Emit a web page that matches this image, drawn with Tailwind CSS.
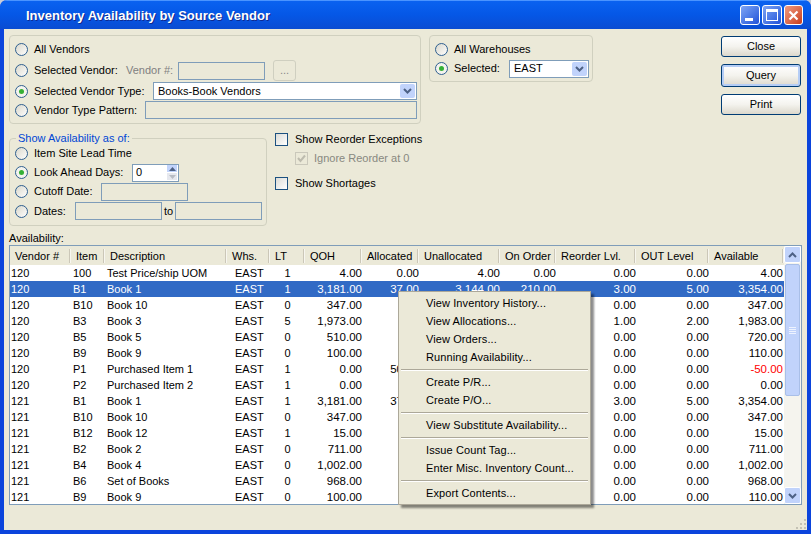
<!DOCTYPE html>
<html lang="en">
<head>
    <meta charset="UTF-8">
    <title>Inventory Availability by Source Vendor</title>
    <script src="https://cdn.jsdelivr.net/npm/@tailwindcss/browser@4"></script>
</head>
<body class="w-[811px] h-[534px] overflow-hidden bg-[#c8ccd8] font-['Liberation_Sans',sans-serif] text-[11px] leading-none text-black">
    <div class="relative w-[811px] h-[534px] flex flex-col rounded-t-[7px] overflow-hidden bg-[#0b44dc]">
        <!-- Title bar -->
        <div class="h-[29px] shrink-0 flex items-center pl-[26px] pr-[8px] bg-gradient-to-b from-[#0a62f0] via-[#0557e6] to-[#0a4cd2] border-t border-[#4a94ff]">
            <span class="text-white font-bold text-[13px] [text-shadow:1px_1px_#0f2a90]">Inventory Availability by Source Vendor</span>
            <div class="ml-auto flex gap-[2px]">
                <div class="w-[20px] h-[20px] rounded-[3px] border border-white bg-gradient-to-br from-[#7fa4f4] to-[#2250d8] flex items-end pl-[4px] pb-[3px]"><div class="w-[8px] h-[3px] bg-white"></div></div>
                <div class="w-[20px] h-[20px] rounded-[3px] border border-white bg-gradient-to-br from-[#7fa4f4] to-[#2250d8] p-[3px]"><div class="w-full h-full border border-white border-t-[3px]"></div></div>
                <div class="w-[19px] h-[20px] rounded-[3px] border border-white bg-gradient-to-br from-[#ee9a80] to-[#c93a14] flex items-center justify-center">
                    <svg width="13" height="13" viewBox="0 0 13 13"><path d="M2.5 2.5l8 8M10.5 2.5l-8 8" stroke="#fff" stroke-width="2.2"/></svg>
                </div>
            </div>
        </div>

        <!-- Client area -->
        <div class="flex-1 mx-[4px] mb-[4px] bg-[#ebe9d8] flex flex-col px-[5px] pt-[6px]">
            <div class="flex h-[98px] shrink-0">
                <!-- Vendor group -->
                <div class="w-[412px] h-[89px] border border-[#d0d0bf] rounded-[4px] pl-[5px] pt-[3px] flex flex-col">
                    <div class="h-[21px] flex items-center"><span data-radio></span><span>All Vendors</span></div>
                    <div class="h-[21px] flex items-center"><span data-radio></span><span class="w-[92px]">Selected Vendor:</span>
                        <span class="w-[52px] text-[#808080]">Vendor #:</span>
                        <div class="w-[87px] h-[18px] border border-[#7f9db9]"></div>
                        <div class="ml-[8px] w-[23px] h-[21px] border border-[#cfcfc0] rounded-[3px] text-center leading-[19px] text-[#888]">...</div>
                    </div>
                    <div class="h-[20px] flex items-center"><span data-radio="on"></span><span class="w-[119px]">Selected Vendor Type:</span>
                        <div class="w-[264px] h-[18px] bg-white border border-[#7f9db9] pl-[4px] flex items-center justify-between">Books-Book Vendors<span data-arrow></span></div>
                    </div>
                    <div class="h-[18px] flex items-center"><span data-radio></span><span class="w-[111px]">Vendor Type Pattern:</span>
                        <div class="w-[272px] h-[18px] border border-[#7f9db9]"></div>
                    </div>
                </div>

                <!-- Warehouse group -->
                <div class="ml-[8px] w-[164px] h-[47px] border border-[#d0d0bf] rounded-[4px] pl-[5px] pt-[4px] flex flex-col">
                    <div class="h-[19px] flex items-center"><span data-radio></span><span>All Warehouses</span></div>
                    <div class="h-[19px] flex items-center"><span data-radio="on"></span><span class="w-[55px]">Selected:</span>
                        <div class="w-[80px] h-[18px] bg-white border border-[#7f9db9] pl-[4px] flex items-center justify-between">EAST<span data-arrow></span></div>
                    </div>
                </div>

                <!-- Buttons -->
                <div class="ml-auto mr-[1px] mt-[1px] w-[80px] flex flex-col gap-[7px]">
                    <div class="h-[21px] border border-[#003c74] rounded-[3px] bg-gradient-to-b from-white via-[#f4f3ee] to-[#dcd8cc] flex items-center justify-center">Close</div>
                    <div class="h-[23px] border border-[#003c74] rounded-[3px] bg-gradient-to-b from-white via-[#f4f3ee] to-[#dcd8cc] shadow-[inset_0_0_0_2px_#b5cdf5] flex items-center justify-center">Query</div>
                    <div class="h-[21px] border border-[#003c74] rounded-[3px] bg-gradient-to-b from-white via-[#f4f3ee] to-[#dcd8cc] flex items-center justify-center">Print</div>
                </div>
            </div>

            <div class="flex h-[98px] shrink-0">
                <!-- Show availability group -->
                <div class="relative mt-[5px] w-[258px] h-[88px] border border-[#d0d0bf] rounded-[4px] pl-[5px] pt-[5px] flex flex-col">
                    <span class="absolute left-[6px] -top-[6px] px-[2px] bg-[#ebe9d8] text-[#0046d5]">Show Availability as of:</span>
                    <div class="h-[19px] flex items-center"><span data-radio></span><span>Item Site Lead Time</span></div>
                    <div class="h-[19px] flex items-center"><span data-radio="on"></span><span class="w-[98px]">Look Ahead Days:</span>
                        <div class="w-[47px] h-[18px] bg-white border border-[#7f9db9] pl-[3px] flex items-center justify-between">0
                            <span class="w-[10px] mr-[1px] flex flex-col gap-[1px]">
                                <span class="h-[7px] bg-[#c1d3fb] flex items-center justify-center"><svg width="7" height="4" viewBox="0 0 7 4"><path d="M0 4l3.500-4 3.500 4z" fill="#4d6185"/></svg></span>
                                <span class="h-[7px] bg-[#e6e8ee] flex items-center justify-center"><svg width="7" height="4" viewBox="0 0 7 4"><path d="M0 0l3.500 4 3.500-4z" fill="#b8bcc4"/></svg></span>
                            </span>
                        </div>
                    </div>
                    <div class="h-[19px] flex items-center"><span data-radio></span><span class="w-[67px]">Cutoff Date:</span>
                        <div class="w-[87px] h-[18px] border border-[#7f9db9]"></div>
                    </div>
                    <div class="h-[20px] flex items-center"><span data-radio></span><span class="w-[41px]">Dates:</span>
                        <div class="w-[87px] h-[18px] border border-[#7f9db9]"></div>
                        <span class="w-[13px] text-center">to</span>
                        <div class="w-[87px] h-[18px] border border-[#7f9db9]"></div>
                    </div>
                </div>

                <!-- Checkboxes -->
                <div class="ml-[8px] flex flex-col">
                    <div class="h-[13px] flex items-center gap-[7px]"><span class="w-[13px] h-[13px] border border-[#1c5180] bg-gradient-to-br from-[#dcdcd7] to-white"></span>Show Reorder Exceptions</div>
                    <div class="mt-[6px] ml-[20px] h-[13px] flex items-center gap-[6px] text-[#888880]">
                        <span class="w-[13px] h-[13px] border border-[#cac8bb] flex items-center justify-center"><svg width="9" height="9" viewBox="0 0 9 9"><path d="M1 4l2.500 3L8 1.500" fill="none" stroke="#bdbbae" stroke-width="2"/></svg></span>Ignore Reorder at 0</div>
                    <div class="mt-[12px] h-[13px] flex items-center gap-[7px]"><span class="w-[13px] h-[13px] border border-[#1c5180] bg-gradient-to-br from-[#dcdcd7] to-white"></span>Show Shortages</div>
                </div>
            </div>

            <div class="h-[14px] shrink-0 flex items-center">Availability:</div>

            <!-- Availability table -->
            <div class="h-[260px] shrink-0 border border-[#7f9db9] bg-white flex">
                <div class="w-[774px] flex flex-col">
                    <div id="head" class="h-[19px] shrink-0 bg-[#ebe9d8] grid grid-cols-[61px_34px_122px_43px_35px_57px_57px_81px_56px_80px_73px_75px]"></div>
                    <div id="rows" class="flex-1 overflow-hidden"></div>
                </div>
                <!-- Scrollbar -->
                <div class="w-[17px] bg-[#f5f4ee] flex flex-col">
                    <div class="h-[17px] rounded-[2px] border border-white bg-[#c1d3fb] flex items-center justify-center"><svg width="9" height="6" viewBox="0 0 9 6"><path d="M1 5l3.500-3.500L8 5" fill="none" stroke="#4d6185" stroke-width="2"/></svg></div>
                    <div class="mt-[1px] mx-[1px] h-[132px] rounded-[2px] border border-[#a9bfe8] bg-[#c1d3fb] flex flex-col items-center justify-center gap-[1px]">
                        <div class="w-[7px] h-[1px] bg-[#eef3ff]"></div><div class="w-[7px] h-[1px] bg-[#eef3ff]"></div><div class="w-[7px] h-[1px] bg-[#eef3ff]"></div><div class="w-[7px] h-[1px] bg-[#eef3ff]"></div>
                    </div>
                    <div class="mt-auto h-[17px] rounded-[2px] border border-white bg-[#c1d3fb] flex items-center justify-center"><svg width="9" height="6" viewBox="0 0 9 6"><path d="M1 1l3.500 3.500L8 1" fill="none" stroke="#4d6185" stroke-width="2"/></svg></div>
                </div>
            </div>

            <!-- Resize grip -->
            <div class="flex-1 flex justify-end items-end">
                <svg class="-mr-[5px]" width="12" height="12" viewBox="0 0 12 12" fill="#c4c2b4"><rect x="9" y="1" width="2" height="2"/><rect x="5" y="5" width="2" height="2"/><rect x="9" y="5" width="2" height="2"/><rect x="1" y="9" width="2" height="2"/><rect x="5" y="9" width="2" height="2"/><rect x="9" y="9" width="2" height="2"/></svg>
            </div>
        </div>

        <!-- Context menu -->
        <div class="absolute left-[398px] top-[291px] w-[193px] h-[214px] bg-[#ebe9d8] border border-[#aca899] shadow-[3px_3px_2px_rgba(0,0,0,0.45)] pt-[2px] tracking-[0.1px]">
            <div class="h-[18px] pl-[27px] pt-[1px] flex items-center">View Inventory History...</div>
            <div class="h-[18px] pl-[27px] pt-[1px] flex items-center">View Allocations...</div>
            <div class="h-[18px] pl-[27px] pt-[1px] flex items-center">View Orders...</div>
            <div class="h-[18px] pl-[27px] pt-[1px] flex items-center">Running Availability...</div>
            <div class="h-[7px] mx-[2px] flex items-center"><div class="w-full h-[2px] bg-[#aca899] border-b border-white"></div></div>
            <div class="h-[18px] pl-[27px] pt-[1px] flex items-center">Create P/R...</div>
            <div class="h-[18px] pl-[27px] pt-[1px] flex items-center">Create P/O...</div>
            <div class="h-[7px] mx-[2px] flex items-center"><div class="w-full h-[2px] bg-[#aca899] border-b border-white"></div></div>
            <div class="h-[18px] pl-[27px] pt-[1px] flex items-center">View Substitute Availability...</div>
            <div class="h-[7px] mx-[2px] flex items-center"><div class="w-full h-[2px] bg-[#aca899] border-b border-white"></div></div>
            <div class="h-[18px] pl-[27px] pt-[1px] flex items-center">Issue Count Tag...</div>
            <div class="h-[18px] pl-[27px] pt-[1px] flex items-center">Enter Misc. Inventory Count...</div>
            <div class="h-[7px] mx-[2px] flex items-center"><div class="w-full h-[2px] bg-[#aca899] border-b border-white"></div></div>
            <div class="h-[18px] pl-[27px] pt-[1px] flex items-center">Export Contents...</div>
        </div>
    </div>

    <script>
        const RADIO_OFF = '<svg class="mr-[6px] shrink-0" width="13" height="13" viewBox="0 0 13 13"><defs><linearGradient id="rg" x1="0" y1="0" x2="1" y2="1"><stop offset="0" stop-color="#d8d6ca"/><stop offset="1" stop-color="#fff"/></linearGradient></defs><circle cx="6.500" cy="6.500" r="6" fill="url(#rg)" stroke="#2f5f8f"/></svg>';
        const RADIO_ON = '<svg class="mr-[6px] shrink-0" width="13" height="13" viewBox="0 0 13 13"><circle cx="6.500" cy="6.500" r="6" fill="#f4f3ee" stroke="#2f5f8f"/><circle cx="6.500" cy="6.500" r="2.500" fill="#35b035"/></svg>';
        const ARROW = '<span class="w-[15px] h-[14px] mr-[1px] rounded-[2px] bg-[#c1d3fb] flex items-center justify-center"><svg width="9" height="6" viewBox="0 0 9 6"><path d="M1 1l3.500 3.500L8 1" fill="none" stroke="#4d6185" stroke-width="2"/></svg></span>';

        document.querySelectorAll('[data-radio]').forEach(el => {
            el.outerHTML = el.dataset.radio === 'on' ? RADIO_ON : RADIO_OFF;
        });
        document.querySelectorAll('[data-arrow]').forEach(el => { el.outerHTML = ARROW; });

        const headers = ['Vendor #', 'Item', 'Description', 'Whs.', 'LT', 'QOH', 'Allocated', 'Unallocated', 'On Order', 'Reorder Lvl.', 'OUT Level', 'Available'];
        document.getElementById('head').innerHTML = headers.map(h => `
            <div class="h-[19px] flex items-center pl-[5px] pt-[1px] justify-between whitespace-nowrap">${h}<span class="w-[2px] h-[14px] border-l border-[#cbc7b8] bg-white/60"></span></div>
        `).join('');

        // cells under the open menu are left empty, the menu covers them anyway
        const rows = [
            ['120', '100', 'Test Price/ship UOM', '1', '4.00', '0.00', '4.00', '0.00', '0.00', '0.00', '4.00'],
            ['120', 'B1', 'Book 1', '1', '3,181.00', '37.00', '3,144.00', '210.00', '3.00', '5.00', '3,354.00'],
            ['120', 'B10', 'Book 10', '0', '347.00', '', '', '', '0.00', '0.00', '347.00'],
            ['120', 'B3', 'Book 3', '5', '1,973.00', '', '', '', '1.00', '2.00', '1,983.00'],
            ['120', 'B5', 'Book 5', '0', '510.00', '', '', '', '0.00', '0.00', '720.00'],
            ['120', 'B9', 'Book 9', '0', '100.00', '', '', '', '0.00', '0.00', '110.00'],
            ['120', 'P1', 'Purchased Item 1', '1', '0.00', '50.00', '', '', '0.00', '0.00', '-50.00'],
            ['120', 'P2', 'Purchased Item 2', '1', '0.00', '', '', '', '0.00', '0.00', '0.00'],
            ['121', 'B1', 'Book 1', '1', '3,181.00', '37.00', '', '', '3.00', '5.00', '3,354.00'],
            ['121', 'B10', 'Book 10', '0', '347.00', '', '', '', '0.00', '0.00', '347.00'],
            ['121', 'B12', 'Book 12', '1', '15.00', '', '', '', '0.00', '0.00', '15.00'],
            ['121', 'B2', 'Book 2', '0', '711.00', '', '', '', '0.00', '0.00', '711.00'],
            ['121', 'B4', 'Book 4', '0', '1,002.00', '', '', '', '0.00', '0.00', '1,002.00'],
            ['121', 'B6', 'Set of Books', '0', '968.00', '', '', '', '0.00', '0.00', '968.00'],
            ['121', 'B9', 'Book 9', '0', '100.00', '', '', '', '0.00', '0.00', '110.00'],
        ];

        document.getElementById('rows').innerHTML = rows.map((r, i) => {
            const rowClass = i === 1 ? 'bg-[#316ac5] text-white' : '';
            const nums = r.slice(4).map((n, j) => {
                const last = j === 6 ? 'pr-[1px]' : '';
                const red = n.startsWith('-') ? 'text-[#ff0000]' : '';
                return `<div class="text-right text-[11.5px] ${last} ${red}">${n}</div>`;
            }).join('');
            return `
                <div class="h-[16px] leading-[16px] whitespace-nowrap grid grid-cols-[61px_34px_122px_43px_35px_57px_57px_81px_56px_80px_73px_75px] ${rowClass}">
                    <div class="pl-[1px]">${r[0]}</div>
                    <div class="pl-[2px]">${r[1]}</div>
                    <div class="pl-[2px]">${r[2]}</div>
                    <div class="pl-[8px]">EAST</div>
                    <div class="text-center">${r[3]}</div>
                    ${nums}
                </div>`;
        }).join('');
    </script>
</body>
</html>
